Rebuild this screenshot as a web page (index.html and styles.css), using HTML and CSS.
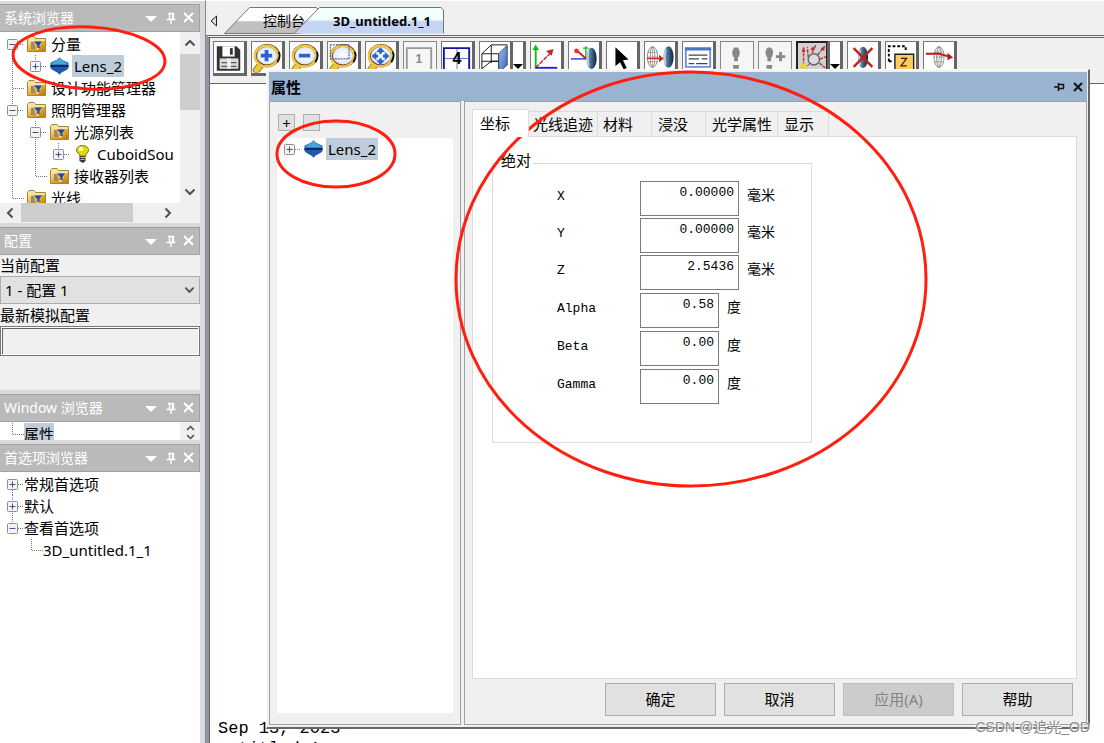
FILE: index.html
```html
<!DOCTYPE html>
<html lang="zh-CN">
<head>
<meta charset="utf-8">
<title>3D_untitled.1_1</title>
<link rel="stylesheet" href="styles.css">
</head>
<body>
<svg class="defs" aria-hidden="true">
  <defs>
    <linearGradient id="gold" x1="0" y1="0" x2="1" y2="1"><stop offset="0" stop-color="#ffe49a"/><stop offset=".5" stop-color="#e9a92a"/><stop offset="1" stop-color="#b8780c"/></linearGradient>
    <linearGradient id="blue" x1="0" y1="0" x2="1" y2="0"><stop offset="0" stop-color="#8fb4d0"/><stop offset=".5" stop-color="#44688a"/><stop offset="1" stop-color="#0c2238"/></linearGradient>
    <linearGradient id="face" x1="0" y1="0" x2="1" y2="1"><stop offset="0" stop-color="#9fc0f0"/><stop offset="1" stop-color="#3a66ae"/></linearGradient>
    <linearGradient id="tabgrey" x1="0" y1="0" x2="0" y2="1"><stop offset=".5" stop-color="#fff"/><stop offset=".55" stop-color="#c0c0c0"/></linearGradient>
    <linearGradient id="tabblue" x1="0" y1="0" x2="0" y2="1"><stop offset=".45" stop-color="#f2ffff"/><stop offset=".55" stop-color="#c6d4f4"/></linearGradient>
    <radialGradient id="glass"><stop offset="0" stop-color="#fff"/><stop offset=".7" stop-color="#e8eef4"/><stop offset="1" stop-color="#b9c4cc"/></radialGradient>
    <symbol id="line" viewBox="0 0 23 22"><path d="M11.5 0V22" class="dots"/></symbol>
    <symbol id="tee" viewBox="0 0 23 22"><path d="M11.5 0V22M12 11.500H23" class="dots"/></symbol>
    <symbol id="elbow" viewBox="0 0 23 22"><path d="M11.500 0V11M12 11.500H23" class="dots"/></symbol>
    <symbol id="box" viewBox="0 0 23 22"><path d="M17 11.500H23" class="dots"/><rect x="6.500" y="6.500" width="10" height="10" rx="1" fill="#f4f4f4" stroke="#8f8f8f"/><path d="M8.500 11.500H14.500" stroke="#3b5499"/></symbol>
    <symbol id="minus" viewBox="0 0 23 22"><path d="M11.500 17V22" class="dots"/><use href="#box"/></symbol>
    <symbol id="minus-mid" viewBox="0 0 23 22"><path d="M11.500 0V22" class="dots"/><use href="#box"/></symbol>
    <symbol id="minus-up" viewBox="0 0 23 22"><path d="M11.500 0V6" class="dots"/><use href="#box"/></symbol>
    <symbol id="plus" viewBox="0 0 23 22"><use href="#box"/><path d="M11.500 8.500V14.500" stroke="#3b5499"/></symbol>
    <symbol id="plus-up" viewBox="0 0 23 22"><path d="M11.500 0V6" class="dots"/><use href="#plus"/></symbol>
    <symbol id="plus-down" viewBox="0 0 23 22"><path d="M11.500 17V22" class="dots"/><use href="#plus"/></symbol>
    <symbol id="plus-mid" viewBox="0 0 23 22"><path d="M11.500 0V22" class="dots"/><use href="#plus"/></symbol>
    <symbol id="folder" viewBox="0 0 19 16"><path d="M.5 15.500V2.500L2 .5H7L8.500 2.500H18.500V15.500Z" fill="#f7e3a4" stroke="#a8843a"/><path d="M1 15V5H18V15Z" fill="url(#gold)"/><path d="M4 6H7L8 13H4Z" fill="#9a8a70"/><path d="M13 6L15 5L11 14H9Z" fill="#fff" opacity=".7"/><path d="M7 5.500H15L12.500 9V12H10.500V9Z" fill="#1747b0"/></symbol>
    <symbol id="lens" viewBox="0 0 18 18"><path d="M9 0C10 3 16 4 18 6V11C16 14 10 15 9 18C8 15 2 14 0 11V6C2 4 8 3 9 0Z" fill="#1f58ac"/><path d="M9 .5C10 3 15.500 4 17.500 7.500H.5C2.500 4 8 3 9 .5Z" fill="#45a8dc"/><path d="M0 8H18V10H0Z" fill="#0b2c66"/></symbol>
    <symbol id="bulb" viewBox="0 0 14 18"><path d="M4 10.500H10V16L7.500 18L4 16Z" fill="#333"/><path d="M5 12.500H10M5 14.500H9" stroke="#bbb"/><path d="M7 .5C11 .5 13 3 13 5C13 8 10.500 8 10 11H4.500C4 8 1 8 1 5C1 3 3 .5 7 .5Z" fill="#e4d800" stroke="#77702a"/><ellipse cx="5.500" cy="4" rx="2.500" ry="2" fill="#fffcae"/></symbol>
    <symbol id="caption-icons" viewBox="0 0 50 14"><path d="M1 5H13L7 11Z" fill="#fff"/><path d="M24 2.500H30M25.500 2V8M29.500 2V8M28.500 2V8M22.500 8.500H31.500M27 9V13" fill="none" stroke="#fff" stroke-width="1.400"/><path d="M40 2L49 11M49 2L40 11" stroke="#fff" stroke-width="2"/></symbol>
    <symbol id="up" viewBox="0 0 12 8"><path d="M1.500 6.500L6 2L10.500 6.500" class="chev"/></symbol>
    <symbol id="down" viewBox="0 0 12 8"><path d="M1.500 1.500L6 6L10.500 1.500" class="chev"/></symbol>
    <symbol id="left" viewBox="0 0 8 12"><path d="M6.500 1.500L2 6L6.500 10.500" class="chev"/></symbol>
    <symbol id="right" viewBox="0 0 8 12"><path d="M1.500 1.500L6 6L1.500 10.500" class="chev"/></symbol>
    <symbol id="magnifier" viewBox="0 0 32 32"><path d="M7 21L1 29L2 32H7L13 25Z" fill="#f3c53c" stroke="#85640c"/><ellipse cx="16" cy="14" rx="12.500" ry="11" fill="url(#glass)" stroke="#6a3c1b" stroke-width="3"/><ellipse cx="15.500" cy="14.500" rx="12.500" ry="11" fill="none" stroke="#f0c645" stroke-width="2.500"/><path d="M28.500 10Q31 15 27 21" fill="none" stroke="#111" stroke-width="2"/></symbol>
    <symbol id="glasslens" viewBox="0 0 12 24"><ellipse cx="6" cy="12" rx="5.500" ry="11.500" fill="url(#blue)"/><path d="M3 4Q1 12 3 20" stroke="#bcd9ee" fill="none" stroke-width="1.500"/></symbol>
    <symbol id="wirelens" viewBox="0 0 12 24"><g fill="none" stroke="#888"><ellipse cx="6" cy="12" rx="5.500" ry="11"/><ellipse cx="6" cy="12" rx="2.500" ry="11"/><path d="M6 1V23M1 7H11M0 12H12M1 17H11" stroke-dasharray="2 1"/></g></symbol>
  </defs>
</svg>

<div class="app">
  <aside class="sidebar">
    <section class="panel panel-system">
      <header class="caption"><h2>系统浏览器</h2><svg class="caption-icons"><use href="#caption-icons"/></svg></header>
      <div class="scroller">
        <ul class="tree">
          <li><button class="cell" aria-label="折叠"><svg><use href="#minus"/></svg></button><svg class="folder"><use href="#folder"/></svg><span>分量</span></li>
          <li><svg class="cell"><use href="#line"/></svg><button class="cell" aria-label="展开"><svg><use href="#plus-up"/></svg></button><svg class="folder lens"><use href="#lens"/></svg><span class="selected">Lens_2</span></li>
          <li><svg class="cell"><use href="#tee"/></svg><svg class="folder"><use href="#folder"/></svg><span>设计功能管理器</span></li>
          <li><button class="cell" aria-label="折叠"><svg><use href="#minus-mid"/></svg></button><svg class="folder"><use href="#folder"/></svg><span>照明管理器</span></li>
          <li><svg class="cell"><use href="#line"/></svg><button class="cell" aria-label="折叠"><svg><use href="#minus-mid"/></svg></button><svg class="folder"><use href="#folder"/></svg><span>光源列表</span></li>
          <li><svg class="cell"><use href="#line"/></svg><svg class="cell"><use href="#line"/></svg><button class="cell" aria-label="展开"><svg><use href="#plus-up"/></svg></button><svg class="folder lens"><use href="#bulb"/></svg><span>CuboidSou</span></li>
          <li><svg class="cell"><use href="#line"/></svg><svg class="cell"><use href="#elbow"/></svg><svg class="folder"><use href="#folder"/></svg><span>接收器列表</span></li>
          <li><svg class="cell"><use href="#elbow"/></svg><svg class="folder"><use href="#folder"/></svg><span>光线</span></li>
        </ul>
        <div class="vbar"><svg class="ch"><use href="#up"/></svg><i class="thumb"></i><svg class="ch"><use href="#down"/></svg></div>
        <div class="hbar"><svg class="cv"><use href="#left"/></svg><i class="thumb"></i><svg class="cv"><use href="#right"/></svg></div>
        <div class="corner"></div>
      </div>
    </section>

    <section class="panel panel-config">
      <header class="caption"><h2>配置</h2><svg class="caption-icons"><use href="#caption-icons"/></svg></header>
      <div class="config">
        <label for="current">当前配置</label>
        <div class="select"><select id="current"><option>1 - 配置 1</option></select><svg class="ch"><use href="#down"/></svg></div>
        <label for="latest">最新模拟配置</label>
        <input id="latest" type="text" readonly>
      </div>
    </section>

    <section class="panel panel-window">
      <header class="caption"><h2>Window 浏览器</h2><svg class="caption-icons"><use href="#caption-icons"/></svg></header>
      <div class="mini">
        <ul class="tree plain"><li><svg class="cell"><use href="#elbow"/></svg><span class="selected">属性</span></li></ul>
        <div class="vbar"><svg class="ch"><use href="#up"/></svg><svg class="ch"><use href="#down"/></svg></div>
      </div>
    </section>

    <section class="panel panel-prefs">
      <header class="caption"><h2>首选项浏览器</h2><svg class="caption-icons"><use href="#caption-icons"/></svg></header>
      <ul class="tree plain">
        <li><button class="cell" aria-label="展开"><svg><use href="#plus-down"/></svg></button><span>常规首选项</span></li>
        <li><button class="cell" aria-label="展开"><svg><use href="#plus-mid"/></svg></button><span>默认</span></li>
        <li><button class="cell" aria-label="折叠"><svg><use href="#minus-up"/></svg></button><span>查看首选项</span></li>
        <li><span class="cell"></span><svg class="cell narrow" viewBox="4 0 19 22"><path d="M11.500 0V11M12 11.500H23" class="dots"/></svg><span>3D_untitled.1_1</span></li>
      </ul>
    </section>
  </aside>

  <main class="workspace">
    <nav class="doc-tabs">
      <button class="tab-scroll" aria-label="向左"><svg width="8" height="12" viewBox="0 0 8 12"><path d="M6.500 1V11L1 6Z" fill="#ddd" stroke="#222"/></svg></button>
      <button class="doc-tab first"><svg viewBox="0 0 98 27" preserveAspectRatio="none"><path d="M.5 26.500L25.500 .5H92L97 4L76 26.500Z" fill="url(#tabgrey)" stroke="#777"/></svg><span>控制台</span></button>
      <button class="doc-tab active"><svg viewBox="0 0 150 27" preserveAspectRatio="none"><path d="M0 26.500L25.500 .5H147L149.500 3V26.500" fill="url(#tabblue)" stroke="#777"/></svg><span>3D_untitled.1_1</span></button>
    </nav>
    <div class="view">
      <div class="toolbar">
        <button aria-label="保存"><svg viewBox="0 0 32 32"><path d="M3 4H24L28 8V30H3Z" fill="#333"/><path d="M9 4H22V15H9Z" fill="#fff"/><path d="M17 6H20V13H17Z" fill="#333"/><path d="M6 17H26V28H6Z" fill="#ddd"/><path d="M8 21.500H24M8 25.500H24" stroke="#555" stroke-width="1.500"/><path d="M14 17H18V28H14Z" fill="#eee"/></svg></button>
        <button aria-label="放大"><svg viewBox="0 0 32 32"><use href="#magnifier"/><path d="M15.500 8V20M9.500 14H21.500" stroke="#2864d6" stroke-width="4"/></svg></button>
        <button aria-label="缩小"><svg viewBox="0 0 32 32"><use href="#magnifier"/><path d="M9.500 14H21.500" stroke="#2864d6" stroke-width="4"/></svg></button>
        <button aria-label="框选缩放"><svg viewBox="0 0 32 32"><use href="#magnifier"/><path d="M2.500 2.500H22.500V17.500H2.500Z" fill="none" stroke="#1433a8" stroke-dasharray="2 1"/></svg></button>
        <button aria-label="全部显示"><svg viewBox="0 0 32 32"><use href="#magnifier"/><path d="M15.500 5L20 10H17V12H14V10H11ZM15.500 24L20 19H17V17H14V19H11ZM6 14.500L11 10V13H13V16H11V19ZM25 14.500L20 10V13H18V16H20V19Z" fill="#2864d6"/></svg></button>
        <button class="off" aria-label="单视图"><svg viewBox="0 0 32 32"><path d="M3 32V6H29V32" fill="none" stroke="#999" stroke-width="2"/><text x="16" y="22" class="num">1</text></svg></button>
        <button aria-label="四视图"><svg viewBox="0 0 32 32"><path d="M2 32V6H29V32" fill="none" stroke="#1414a0" stroke-width="2"/><path d="M16 7V32M3 17H28" stroke="#5c6cd6"/><text x="16" y="23" class="num big">4</text></svg></button>
        <button class="split" aria-label="视图方向"><svg viewBox="0 0 32 32"><path d="M2 12H20V32H2ZM2 12L12 2.500H29M12 3V22M2 20H20M2 28L12 20H20" fill="none" stroke="#111"/><path d="M20 12L29 3V24L20 32Z" fill="url(#face)" stroke="#234781"/></svg><i></i></button>
        <button aria-label="坐标轴"><svg viewBox="0 0 32 32"><path d="M5 28V5" stroke="#1b1" stroke-width="2"/><path d="M1.500 8L5 2L8.500 8Z" fill="#1b1"/><path d="M5 27L22 10" stroke="#c22" stroke-width="1.500" stroke-dasharray="5 1"/><path d="M24 7L22 14L16 9Z" fill="#c22"/><path d="M5 27H28" stroke="#22c" stroke-width="2"/></svg></button>
        <button aria-label="局部坐标"><svg viewBox="0 0 32 32"><path d="M18 18V4M15 6H21" stroke="#2b2" stroke-width="1.500"/><path d="M18 17L9 9" stroke="#c22" stroke-width="2"/><circle cx="8" cy="9" r="2.500" fill="#e32"/><path d="M2 17.500H18" stroke="#33d" stroke-width="1.500"/><use href="#glasslens" x="18" y="5" width="12" height="24"/></svg></button>
        <button aria-label="选择"><svg viewBox="0 0 32 32"><path d="M9 5V25L14 21L18 29L21 27L17 19L23 18Z" fill="#000"/></svg></button>
        <button aria-label="移动"><svg viewBox="0 0 32 32"><use href="#wirelens" x="2" y="3" width="12" height="25"/><use href="#glasslens" x="19" y="3" width="12" height="25"/><path d="M2 17H16" stroke="#d21" stroke-width="1.500"/><path d="M15 13L20 17L15 21Z" fill="#d21"/></svg></button>
        <button aria-label="属性"><svg viewBox="0 0 32 32"><path d="M3 6H29V26H3Z" fill="#fff" stroke="#6f90d8" stroke-width="2"/><path d="M2 7H30" stroke="#4a72c8" stroke-width="3"/><path d="M6 13.500H26M6 17.500H17M20 17.500H26M6 22.500H12M14 22.500H26" stroke="#444" stroke-width="1.500"/></svg></button>
        <button class="off" aria-label="运行"><svg viewBox="0 0 32 32"><ellipse cx="16" cy="11" rx="4" ry="6" fill="#888"/><path d="M14 16H18V20H14ZM13 24H19V28H13Z" fill="#888"/></svg></button>
        <button class="off" aria-label="添加运行"><svg viewBox="0 0 32 32"><ellipse cx="11" cy="11" rx="4" ry="6" fill="#888"/><path d="M9 16H13V20H9ZM8 24H14V28H8Z" fill="#888"/><path d="M23 10V20M18 15H28" stroke="#888" stroke-width="3"/></svg></button>
        <button class="split pressed" aria-label="光线追迹"><svg viewBox="0 0 32 32"><circle cx="18" cy="18" r="6" fill="#ddd" stroke="#666" stroke-width="1.500"/><path d="M7 25V6M12 16L11 5M16 11L20 3M22 13L29 5M24 18L31 15M24 22L30 27" stroke="#b33" stroke-width="1.500" stroke-dasharray="4 1"/><path d="M5 10L7 4L9 10ZM14 8L17 4L19 8ZM25 7L30 3L29 9Z" fill="#b33"/><circle cx="7" cy="26" r="4" fill="#e8d25a"/><path d="M11 25L14 22" stroke="#333"/></svg><i></i></button>
        <button aria-label="删除"><svg viewBox="0 0 32 32"><use href="#glasslens" x="10" y="3" width="12" height="26"/><path d="M6 6L26 26M26 6L6 26" stroke="#c02018" stroke-width="2.500"/></svg></button>
        <button aria-label="Z 序"><svg viewBox="0 0 32 32"><path d="M3 20V4H21V10M3 20H8" fill="none" stroke="#000" stroke-width="2" stroke-dasharray="3 2"/><path d="M9.500 12.500H29.500V32H9.500Z" fill="#fc5" stroke="#222" stroke-width="1.500"/><path d="M16 17H22L16 25H22" fill="none" stroke="#222" stroke-width="1.300"/></svg></button>
        <button aria-label="透镜光线"><svg viewBox="0 0 32 32"><use href="#wirelens" x="10" y="3" width="12" height="25"/><path d="M2 12H16L27 15" fill="none" stroke="#c01818" stroke-width="2"/><path d="M25 11L31 16L25 19Z" fill="#c01818"/></svg></button>
      </div>
      <div class="canvas"><p class="stamp">Sep 13, 2023<br>untitled.1</p></div>
    </div>
  </main>

  <section class="dialog" role="dialog" aria-labelledby="dlg-title">
    <header class="titlebar"><h1 id="dlg-title">属性</h1>
      <button aria-label="固定"><svg width="12" height="12" viewBox="0 0 12 12"><path d="M1 6H5M5.500 2V10M6 3.500H10.500V7.500M6 7.500H11" fill="none" stroke="#111" stroke-width="1.500"/></svg></button>
      <button aria-label="关闭"><svg width="12" height="12" viewBox="0 0 12 12"><path d="M2 2L10 10M10 2L2 10" stroke="#111" stroke-width="2"/></svg></button>
    </header>
    <div class="dialog-body">
      <div class="pane objects">
        <div class="expanders"><button>+</button><button>-</button></div>
        <ul class="tree"><li><button class="cell" aria-label="展开"><svg><use href="#plus"/></svg></button><svg class="folder lens"><use href="#lens"/></svg><span class="selected">Lens_2</span></li></ul>
      </div>
      <div class="pane details">
        <div class="tabs" role="tablist">
          <button role="tab" aria-selected="true">坐标</button><button role="tab">光线追迹</button><button role="tab">材料</button><button role="tab">浸没</button><button role="tab">光学属性</button><button role="tab">显示</button>
        </div>
        <div class="page" role="tabpanel">
          <fieldset>
            <legend>绝对</legend>
            <div class="field"><label for="x">X</label><input id="x" value="0.00000"><span>毫米</span></div>
            <div class="field"><label for="y">Y</label><input id="y" value="0.00000"><span>毫米</span></div>
            <div class="field"><label for="z">Z</label><input id="z" value="2.5436"><span>毫米</span></div>
            <div class="field angle"><label for="alpha">Alpha</label><input id="alpha" value="0.58"><span>度</span></div>
            <div class="field angle"><label for="beta">Beta</label><input id="beta" value="0.00"><span>度</span></div>
            <div class="field angle"><label for="gamma">Gamma</label><input id="gamma" value="0.00"><span>度</span></div>
          </fieldset>
        </div>
        <div class="actions"><button>确定</button><button>取消</button><button disabled>应用(A)</button><button>帮助</button></div>
      </div>
    </div>
  </section>

  <svg class="marks" aria-hidden="true"><ellipse cx="89" cy="58" rx="76" ry="31" transform="rotate(3 89 58)"/><ellipse cx="336" cy="154" rx="59" ry="33"/><ellipse cx="691" cy="279" rx="235" ry="207"/></svg>
  <div class="watermark">CSDN @追光_OD</div>
</div>
</body>
</html>
```
FILE: styles.css
```css
* { box-sizing: border-box; }
body { margin: 0; background: #f0f0f0; color: #000; font: 15px/22px "Noto Sans", "Noto Sans CJK SC", sans-serif; }
button, input, select { font: inherit; color: inherit; margin: 0; border-radius: 0; }
button { padding: 0; border: 0; background: none; }
h1, h2, p, ul { margin: 0; padding: 0; }
svg { display: block; flex: none; }
.defs { position: absolute; width: 0; height: 0; }
.dots { stroke: #777; stroke-dasharray: 1 1; fill: none; }
.chev { stroke: #505050; stroke-width: 2; fill: none; }

.app { position: relative; display: flex; height: 100vh; overflow: hidden; }

/* sidebar */
.sidebar { flex: none; width: 205px; padding: 3px 5px 0 0; display: flex; flex-direction: column; gap: 4px; background: #dadada; border-top: 1px solid #fff; }
.panel { flex: none; display: flex; flex-direction: column; overflow: hidden; background: #f0f0f0; }
.panel-system { height: 219px; }
.panel-config { height: 163px; }
.panel-prefs { flex: 1; background: #fff; }
.caption { flex: none; height: 28px; display: flex; align-items: center; justify-content: space-between; padding: 0 5px 0 4px; background: #bababa; border: 1px solid #a0a0a0; border-left: 0; color: #fff; }
.caption h2 { font-size: 14px; font-weight: 400; }
.caption-icons { width: 50px; height: 14px; }
.scroller { display: grid; grid-template: 171px 20px / 1fr 20px; }
.tree { list-style: none; background: #fff; padding: 1px 0 0 1px; overflow: hidden; min-width: 0; }
.tree li { display: flex; align-items: center; height: 22px; white-space: nowrap; }
.tree .cell { flex: none; width: 23px; height: 22px; }
.tree .narrow { width: 19px; }
.cell svg { width: 23px; height: 22px; }
.folder { width: 19px; height: 16px; margin: 0 3px; }
.folder.lens { height: 18px; }
.tree span:not(.cell) { padding: 0 2px; }
.tree .selected { background: #bfcddb; }
.plain { flex: 1; }
.plain span:not(.cell) { padding: 0; }
.vbar { display: flex; flex-direction: column; align-items: center; justify-content: space-between; padding: 7px 0; background: #f0f0f0; }
.vbar .thumb { align-self: stretch; height: 56px; margin: 7px 0 auto; }
.hbar { display: flex; align-items: center; justify-content: space-between; padding: 0 8px 0 6px; background: #f0f0f0; }
.hbar .thumb { align-self: stretch; width: 112px; margin: 0 auto 1px 7px; }
.corner { background: #f0f0f0; }
.thumb { background: #cdcdcd; }
.ch { width: 12px; height: 8px; }
.cv { width: 8px; height: 12px; }
.config { display: flex; flex-direction: column; line-height: 21px; }
.select { display: flex; position: relative; margin-bottom: 1px; }
.select select { flex: 1; height: 28px; padding: 0 4px; appearance: none; background: #e1e1e1; border: 1px solid #adadad; }
.select svg { position: absolute; right: 5px; top: 10px; }
.select .ch { width: 11px; }
.select .chev { stroke-width: 1; }
#latest { width: 100%; height: 30px; background: #f0f0f0; border: 1px solid #777; box-shadow: inset 0 0 0 1px #fff, inset 2px 2px #666; }
.mini { display: flex; height: 18px; }
.mini .vbar { flex: none; width: 20px; padding: 3px 0 0; }
.mini .ch { width: 9px; height: 6px; }

/* workspace */
.workspace { flex: 1; min-width: 0; display: flex; flex-direction: column; padding-top: 6px; background: #f0f0f0; border-top: 1px solid #fff; border-left: 1px solid #888; }
.doc-tabs { display: flex; align-items: center; height: 27px; }
.tab-scroll { width: 18px; padding-left: 4px; }
.doc-tab { position: relative; height: 27px; text-align: center; }
.doc-tab svg { position: absolute; inset: 0; width: 100%; height: 100%; }
.doc-tab span { position: relative; }
.first { width: 98px; padding-left: 22px; font-size: 14px; }
.doc-tab.active { width: 150px; margin-left: -28px; padding-left: 26px; font-size: 13px; font-weight: 700; }
.view { flex: 1; min-height: 0; display: flex; flex-direction: column; margin-top: 1px; border-top: 3px double #666; border-left: 3px solid #8e96aa; }
.toolbar { display: flex; gap: 4px; padding: 3px 3px 7px; border-left: 1px solid #666; }
.toolbar button { flex: none; display: flex; width: 34px; height: 35px; background: #fff; border: 1px solid #777; border-right: 3px solid #666; border-bottom: 3px solid #666; }
.toolbar button > svg { width: 30px; height: 31px; }
.toolbar .split { width: 47px; }
.split i { flex: 1; border-left: 3px solid #666; display: flex; align-items: flex-end; justify-content: center; padding-bottom: 4px; }
.split i::after { content: ""; border: 5px solid transparent; border-top-color: #000; border-bottom: 0; }
.toolbar .off { background: #f5f5f5; border: 1px solid #888; }
.pressed > svg { background: #d2d2d2; outline: 2px solid #222; outline-offset: -1px; }
.num { font: 700 13px "Liberation Sans", sans-serif; text-anchor: middle; fill: #888; }
.num.big { font-size: 17px; fill: #000; }
.canvas { flex: 1; min-height: 0; display: flex; flex-direction: column; justify-content: flex-end; overflow: hidden; background: #fff; border-left: 1px solid #666; border-top: 1px solid #666; }
.stamp { padding-left: 8px; margin-bottom: -16px; font: 17px/20px "Liberation Mono", monospace; }

/* dialog window */
.dialog { position: absolute; left: 266px; top: 69px; right: 14px; bottom: 14px; display: flex; flex-direction: column; background: #f0f0f0; border: 1px solid #fff; border-right: 2px solid #666; border-bottom: 2px solid #666; padding: 2px 1px 2px 2px; }
.titlebar { flex: none; height: 29px; display: flex; align-items: center; gap: 7px; padding: 0 3px 0 2px; background: #99b3d1; }
.titlebar h1 { flex: 1; font-size: 15px; line-height: 22px; font-weight: 700; }
.dialog-body { flex: 1; min-height: 0; display: flex; gap: 3px; }
.pane { border: 1px solid #a0a0a0; display: flex; flex-direction: column; }
.objects { flex: none; width: 192px; padding: 12px 7px 11px; }
.objects .tree { flex: 1; padding: 0 0 0 1px; }
.expanders { display: flex; gap: 8px; padding: 0 1px 7px; }
.expanders button { width: 17px; height: 17px; background: #e1e1e1; border: 1px solid #adadad; line-height: 14px; }
.details { flex: 1; min-width: 0; padding: 7px 9px 7px 7px; }
.tabs { display: flex; align-items: flex-end; height: 27px; }
.tabs button { height: 25px; padding: 0 4px; border: 1px solid #dcdcdc; border-left: 0; border-bottom: 0; }
.tabs button:nth-child(3) { padding: 0 18px 0 5px; }
.tabs button:nth-child(4) { padding: 0 17px 0 6px; }
.tabs button:nth-child(5) { padding: 0 5px 0 6px; }
.tabs button:nth-child(6) { padding: 0 14px 0 6px; }
.tabs button:first-child { height: 28px; margin-bottom: -1px; padding: 0 18px 2px 7px; background: #fff; border-left: 1px solid #dcdcdc; }
.page { flex: 1; min-height: 0; padding: 15px 19px; background: #fff; border: 1px solid #dcdcdc; }
.page, .tabs button { position: relative; }
.tabs button:first-child { z-index: 1; }
fieldset { margin: 0; width: 320px; height: 291px; padding: 7px 0 0 64px; border: 1px solid #dcdcdc; display: flex; flex-direction: column; gap: 2px; font-family: "Liberation Mono", "Noto Sans CJK SC", monospace; }
legend { margin-left: -57px; padding: 0 2px 0 1px; }
.field { display: flex; gap: 8px; height: 35px; }
.field label { width: 75px; padding-top: 5px; font-size: 13px; }
.field input { width: 99px; height: 35px; padding: 0 4px 12px; border: 1px solid #7a7a7a; background: #fff; text-align: right; font-size: 13px; }
.angle { margin-top: 1px; }
.angle input { width: 79px; }
.field span { padding-top: 4px; font-size: 14px; }
.actions { display: flex; justify-content: flex-end; gap: 8px; padding: 4px 4px 1px 0; }
.actions button { width: 111px; height: 33px; padding-bottom: 2px; background: #e1e1e1; border: 1px solid #adadad; }
.actions button:disabled { background: #ccc; border-color: #bfbfbf; color: #838383; }

/* overlays */
.marks { position: absolute; inset: 0; width: 100%; height: 100%; pointer-events: none; fill: none; stroke: #ff1f10; stroke-width: 3; }
.watermark { position: absolute; right: 14px; bottom: 5px; font: 14px/22px "Liberation Sans", "Noto Sans CJK SC", sans-serif; color: #888; text-shadow: 0 0 2px #fff, 1px 1px #fff; }
```
